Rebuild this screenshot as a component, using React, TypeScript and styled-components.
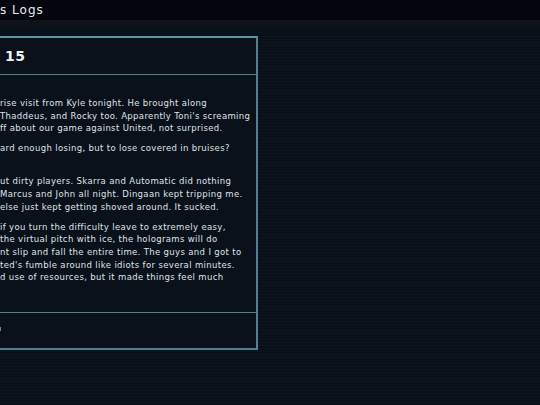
import styled, { createGlobalStyle } from "styled-components";

const GlobalStyle = createGlobalStyle`
  html, body {
    margin: 0;
    padding: 0;
    background-color: #0a1019;
  }
  body {
    font-family: "DejaVu Sans", "Liberation Sans", sans-serif;
    color: #dfe4e8;
    overflow: hidden;
  }
`;

const Screen = styled.div`
  width: 540px;
  height: 405px;
  overflow: hidden;
  background-color: #0a1019;
  background-image: repeating-linear-gradient(
    to bottom,
    rgba(255, 255, 255, 0.018) 0px,
    rgba(255, 255, 255, 0.018) 1px,
    transparent 1px,
    transparent 3px
  );
`;

const TopBar = styled.div`
  height: 20px;
  display: flex;
  align-items: center;
  background-color: #05060d;
  font-size: 12px;
  letter-spacing: 1px;
  color: #e6eaee;
`;

const Glow = styled.div`
  height: 16px;
  background: linear-gradient(to bottom, #0d141c, #0a1019);
`;

const Panel = styled.section`
  width: 258px;
  box-sizing: border-box;
  border-top: 2px solid #5d9aa8;
  border-right: 2px solid #587f8c;
  border-bottom: 2px solid #587f8c;
  background-color: #0a111a;
`;

const PanelHead = styled.header`
  height: 36px;
  display: flex;
  align-items: center;
  padding-left: 5px;
  border-bottom: 1px solid #4f7f8c;
  font-size: 14px;
  font-weight: bold;
  letter-spacing: 0.5px;
  color: #eef2f4;
`;

const PanelBody = styled.div`
  height: 238px;
  padding-top: 22px;
  box-sizing: border-box;
  border-bottom: 1px solid #4f7f8c;
  font-size: 8.5px;
  line-height: 12.7px;
  letter-spacing: 0.35px;
  white-space: nowrap;
`;

const Para = styled.p`
  margin: 0 0 7.4px 0;
`;

const Line = styled.div`
  height: 12.7px;
`;

const PanelFoot = styled.footer`
  height: 35px;
  display: flex;
  align-items: center;
  padding-bottom: 4px;
  box-sizing: border-box;
`;

const Nub = styled.span`
  width: 1px;
  height: 4px;
  background-color: #5d8f9c;
`;

const paragraphs = [
  [
    "rise visit from Kyle tonight. He brought along",
    "Thaddeus, and Rocky too. Apparently Toni's screaming",
    "ff about our game against United, not surprised.",
  ],
  ["ard enough losing, but to lose covered in bruises?", ""],
  [
    "ut dirty players. Skarra and Automatic did nothing",
    " Marcus and John all night. Dingaan kept tripping me.",
    "else just kept getting shoved around. It sucked.",
  ],
  [
    " if you turn the difficulty leave to extremely easy,",
    " the virtual pitch with ice, the holograms will do",
    "nt slip and fall the entire time. The guys and I got to",
    "ted's fumble around like idiots for several minutes.",
    "d use of resources, but it made things feel much",
  ],
];

const App = () => {
  return (
    <Screen>
      <GlobalStyle />
      <TopBar>s Logs</TopBar>
      <Glow />
      <Panel>
        <PanelHead>15</PanelHead>
        <PanelBody>
          {paragraphs.map((lines, i) => (
            <Para key={i}>
              {lines.map((l, j) => (
                <Line key={j}>{l}</Line>
              ))}
            </Para>
          ))}
        </PanelBody>
        <PanelFoot>
          <Nub />
        </PanelFoot>
      </Panel>
    </Screen>
  );
};

export default App;
